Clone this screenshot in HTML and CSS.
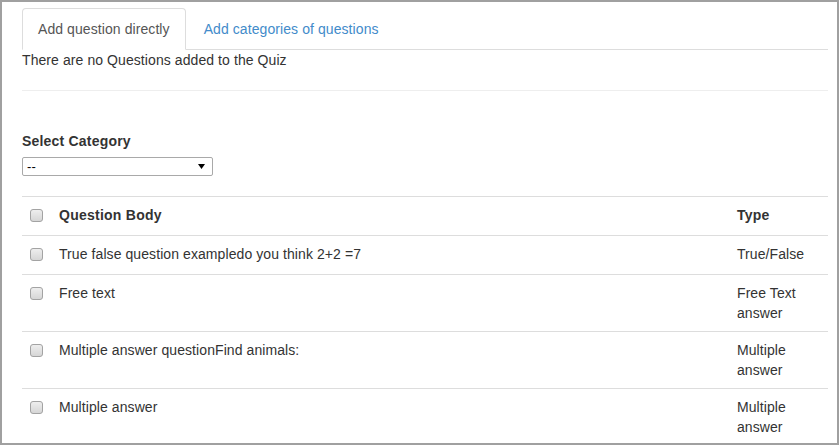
FILE: index.html
```html
<!DOCTYPE html>
<html>
<head>
<meta charset="utf-8">
<link rel="stylesheet" href="styles.css">
</head>
<body>
<div class="frame">
  <ul class="tabs">
    <li class="tab active"><a>Add question directly</a></li>
    <li class="tab"><a>Add categories of questions</a></li>
  </ul>
  <p class="empty">There are no Questions added to the Quiz</p>
  <hr class="rule">
  <div class="field">
    <label class="field-label">Select Category</label>
    <div class="select-box">
      <span class="select-value">--</span>
      <svg class="select-arrow" width="7" height="5" viewBox="0 0 7 5"><path d="M0 0H7L3.5 5Z" fill="#000"/></svg>
    </div>
  </div>
  <table class="qtable">
    <thead>
      <tr>
        <th class="col-check"><span class="check"></span></th>
        <th class="col-body">Question Body</th>
        <th class="col-type">Type</th>
      </tr>
    </thead>
    <tbody>
      <tr>
        <td class="col-check"><span class="check"></span></td>
        <td>True false question exampledo you think 2+2 =7</td>
        <td>True/False</td>
      </tr>
      <tr>
        <td class="col-check"><span class="check"></span></td>
        <td>Free text</td>
        <td>Free Text answer</td>
      </tr>
      <tr>
        <td class="col-check"><span class="check"></span></td>
        <td>Multiple answer questionFind animals:</td>
        <td>Multiple answer</td>
      </tr>
      <tr>
        <td class="col-check"><span class="check"></span></td>
        <td>Multiple answer</td>
        <td>Multiple answer</td>
      </tr>
    </tbody>
  </table>
</div>
</body>
</html>
```

FILE: styles.css
```css
* { box-sizing: border-box; }
html, body {
  margin: 0;
  padding: 0;
  background: #fff;
}
body {
  font-family: "Liberation Sans", Arial, Helvetica, sans-serif;
  font-size: 14px;
  line-height: 20px;
  color: #333;
  letter-spacing: 0.08px;
}
.frame {
  width: 839px;
  height: 445px;
  border: 2px solid #a0a0a0;
  padding: 6px 9px 0 20px;
  overflow: hidden;
}
.tabs {
  list-style: none;
  margin: 0;
  padding: 0;
  display: flex;
  border-bottom: 1px solid #ddd;
}
.tab {
  margin-right: 2px;
  margin-bottom: -1px;
}
.tab a {
  display: block;
  padding: 10px 15px;
  border: 1px solid transparent;
  border-radius: 4px 4px 0 0;
  color: #428bca;
  line-height: 20px;
}
.tab.active a {
  color: #555;
  background: #fff;
  border-color: #ddd;
  border-bottom-color: transparent;
}
.empty {
  margin: 0;
}
.rule {
  margin: 20px 0;
  border: 0;
  border-top: 1px solid #eee;
  height: 0;
}
.field {
  padding-top: 20px;
}
.field-label {
  display: block;
  font-weight: bold;
  letter-spacing: 0.2px;
  margin-bottom: 6px;
}
.select-box {
  width: 191px;
  height: 19px;
  border: 1px solid #a9a9a9;
  border-radius: 2px;
  display: flex;
  align-items: center;
  justify-content: space-between;
  padding: 0 7px 0 4px;
  font-size: 13px;
  color: #000;
}
.select-value {
  line-height: 17px;
}
.select-arrow {
  display: block;
}
.qtable {
  margin-top: 20px;
  width: 806px;
  border-collapse: collapse;
  table-layout: fixed;
}
.qtable th,
.qtable td {
  padding: 8px;
  text-align: left;
  vertical-align: top;
  border-top: 1px solid #ddd;
  line-height: 20px;
}
.qtable th {
  font-weight: bold;
  letter-spacing: 0.25px;
}
.qtable .col-check {
  width: 29px;
}
.qtable .col-type {
  width: 99px;
}
.check {
  display: inline-block;
  width: 13px;
  height: 13px;
  margin-top: 4px;
  border: 1px solid #a3a3a3;
  border-radius: 3px;
  background: linear-gradient(#eeeeee, #d6d6d6);
}
```
